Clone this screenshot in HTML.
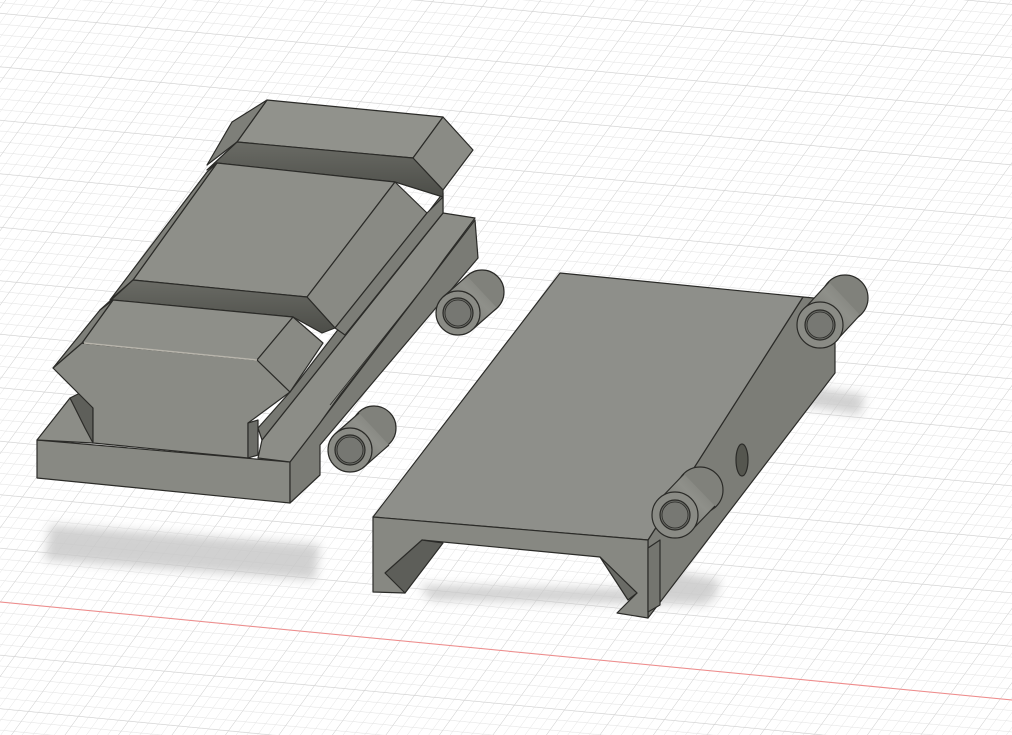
<!DOCTYPE html>
<html><head><meta charset="utf-8"><style>
html,body{margin:0;padding:0;background:#fff;overflow:hidden}
svg{display:block}
</style></head><body>
<svg width="1012" height="735" viewBox="0 0 1012 735" xmlns="http://www.w3.org/2000/svg">
<defs>
<pattern id="g" width="10" height="10" patternUnits="userSpaceOnUse" patternTransform="matrix(1 0.097 0.72 -1 0 602)">
<path d="M0 0H10M0 0V10" stroke="#e2e2e2" stroke-width="0.9" fill="none"/>
</pattern>
<pattern id="G" width="50" height="50" patternUnits="userSpaceOnUse" patternTransform="matrix(1 0.097 0.72 -1 0 602)">
<path d="M0 0H50M0 0V50" stroke="#cfcfcf" stroke-width="1" fill="none"/>
</pattern>
<filter id="b" x="-20%" y="-50%" width="140%" height="200%"><feGaussianBlur stdDeviation="5"/></filter>
<linearGradient id="dk" x1="0" y1="0" x2="0" y2="1"><stop offset="0" stop-color="#6a6b65"/><stop offset="1" stop-color="#4c4d48"/></linearGradient>
<linearGradient id="cy" x1="0" y1="1" x2="1" y2="0"><stop offset="0" stop-color="#6e6f69"/><stop offset="0.6" stop-color="#8f908a"/><stop offset="1" stop-color="#7a7b75"/></linearGradient>
</defs>
<rect width="1012" height="735" fill="#fff"/>
<rect width="1012" height="735" fill="url(#g)"/>
<rect width="1012" height="735" fill="url(#G)"/>
<line x1="0" y1="602" x2="1012" y2="700" stroke="#f08a8a" stroke-width="1"/>

<g filter="url(#b)" fill="#c9c9c9" opacity="0.85">
<polygon points="50,525 320,545 315,580 45,560"/>
<polygon points="420,585 700,590 710,605 430,600"/>
<polygon points="640,565 720,580 715,600 640,590"/>
<polygon points="800,385 865,395 860,415 800,405"/>
</g>

<g stroke="#2b2b28" stroke-width="1.2" stroke-linejoin="round">
<!-- LEFT PART -->
<!-- base front face -->
<polygon points="37,440 290,462 290,503 37,478" fill="#888983"/>
<!-- base right outer side -->
<polygon points="290,462 475,220 478,258 320,445 320,475 290,503" fill="#7a7b75"/>
<!-- flange top -->
<polygon points="443,213 475,218 445,258 427,283 340,395 320,423 290,462 258,458 262,440" fill="#8c8d87"/>
<!-- body right vertical wall -->
<polygon points="443,193 443,213 262,440 258,428 290,392" fill="#777872"/>
<line x1="427" y1="283" x2="330" y2="405" stroke-width="0.8"/>
<!-- left notch -->
<polygon points="37,440 70,398 93,408 93,443" fill="#8c8d87"/>
<polygon points="70,398 82,392 93,408 93,443 85,428" fill="#5e5f5a"/>
<!-- body front (dovetail) -->
<polygon points="53,368 82,343 257,360 290,392 248,423 248,458 93,443 93,408" fill="#8a8b85"/>
<polygon points="248,423 258,420 258,455 248,458" fill="#6c6d68"/>
<!-- back block -->
<polygon points="267,100 443,117 413,158 237,142" fill="#91928c"/>
<polygon points="443,117 473,150 443,190 413,158" fill="#8a8b85"/>
<polygon points="267,100 237,142 207,165 232,122" fill="#7e7f79"/>
<!-- back groove -->
<polygon points="237,142 413,158 443,190 443,197 395,182 217,163 207,170" fill="url(#dk)"/>
<!-- middle block -->
<polygon points="217,163 395,182 307,297 133,280" fill="#8e8f89"/>
<polygon points="395,182 427,213 335,328 307,297" fill="#898a84"/>
<polygon points="217,163 207,172 110,300 133,280" fill="#7e7f79"/>
<polygon points="427,213 443,197 443,213 345,335 335,328" fill="#7c7d77"/>
<!-- front groove -->
<polygon points="133,280 307,297 335,328 322,333 293,317 113,300 100,310" fill="url(#dk)"/>
<!-- front block -->
<polygon points="113,300 293,317 257,360 82,343" fill="#8e8f89"/>
<polygon points="293,317 323,343 290,392 257,360" fill="#898a84"/>
<polygon points="113,300 82,343 53,368 100,310" fill="#7e7f79"/>
<line x1="84" y1="343" x2="257" y2="360" stroke="#b8b5ac" stroke-width="1.5"/>

<!-- hinges left: cylinder axis (24,-21), perp (15,16) -->
<g>
<circle cx="482" cy="292" r="22" fill="#80817b"/>
<polygon points="473,329 443,297 467,276 497,308" fill="url(#cy)" stroke="none"/>
<line x1="467" y1="276" x2="443" y2="297"/><line x1="497" y1="308" x2="473" y2="329"/>
<circle cx="458" cy="313" r="22" fill="#8a8b85"/>
<circle cx="458" cy="313" r="15" fill="#6a6b66"/>
<circle cx="458" cy="313" r="13" fill="#767772" stroke-width="0.8"/>
</g>
<g>
<circle cx="374" cy="428" r="22" fill="#80817b"/>
<polygon points="365,466 335,434 359,413 389,445" fill="url(#cy)" stroke="none"/>
<line x1="359" y1="413" x2="335" y2="434"/><line x1="389" y1="445" x2="365" y2="466"/>
<circle cx="350" cy="450" r="22" fill="#8a8b85"/>
<circle cx="350" cy="450" r="15" fill="#6a6b66"/>
<circle cx="350" cy="450" r="13" fill="#767772" stroke-width="0.8"/>
</g>

<!-- RIGHT PART -->
<polygon points="648,540 803,297 835,300 835,373 648,618" fill="#7c7d77"/>
<polygon points="560,273 803,297 648,540 373,517" fill="#8e8f8a"/>
<polygon points="373,517 648,540 648,618 617,613 637,593 600,557 422,540 405,593 373,592" fill="#878882"/>
<polygon points="385,573 422,540 443,543 405,593" fill="#5d5e59"/>
<polygon points="600,557 637,593 628,600" fill="#6a6b66"/>
<polygon points="648,548 660,540 660,605 648,612" fill="#74756f"/>
<ellipse cx="742" cy="460" rx="6" ry="16" fill="#55564f"/>
<g>
<circle cx="845" cy="298" r="23" fill="#80817b"/>
<polygon points="836,341 805,308 829,282 860,315" fill="url(#cy)" stroke="none"/>
<line x1="829" y1="282" x2="805" y2="308"/><line x1="860" y1="315" x2="836" y2="341"/>
<circle cx="820" cy="325" r="23" fill="#8a8b85"/>
<circle cx="820" cy="325" r="15" fill="#6a6b66"/>
<circle cx="820" cy="325" r="13" fill="#777873" stroke-width="0.8"/>
</g>
<g>
<circle cx="700" cy="490" r="23" fill="#80817b"/>
<polygon points="691,531 660,499 684,474 715,506" fill="url(#cy)" stroke="none"/>
<line x1="684" y1="474" x2="660" y2="499"/><line x1="715" y1="506" x2="691" y2="531"/>
<circle cx="675" cy="515" r="23" fill="#8a8b85"/>
<circle cx="675" cy="515" r="15" fill="#6a6b66"/>
<circle cx="675" cy="515" r="13" fill="#777873" stroke-width="0.8"/>
</g>
</g>
</svg>
</body></html>
